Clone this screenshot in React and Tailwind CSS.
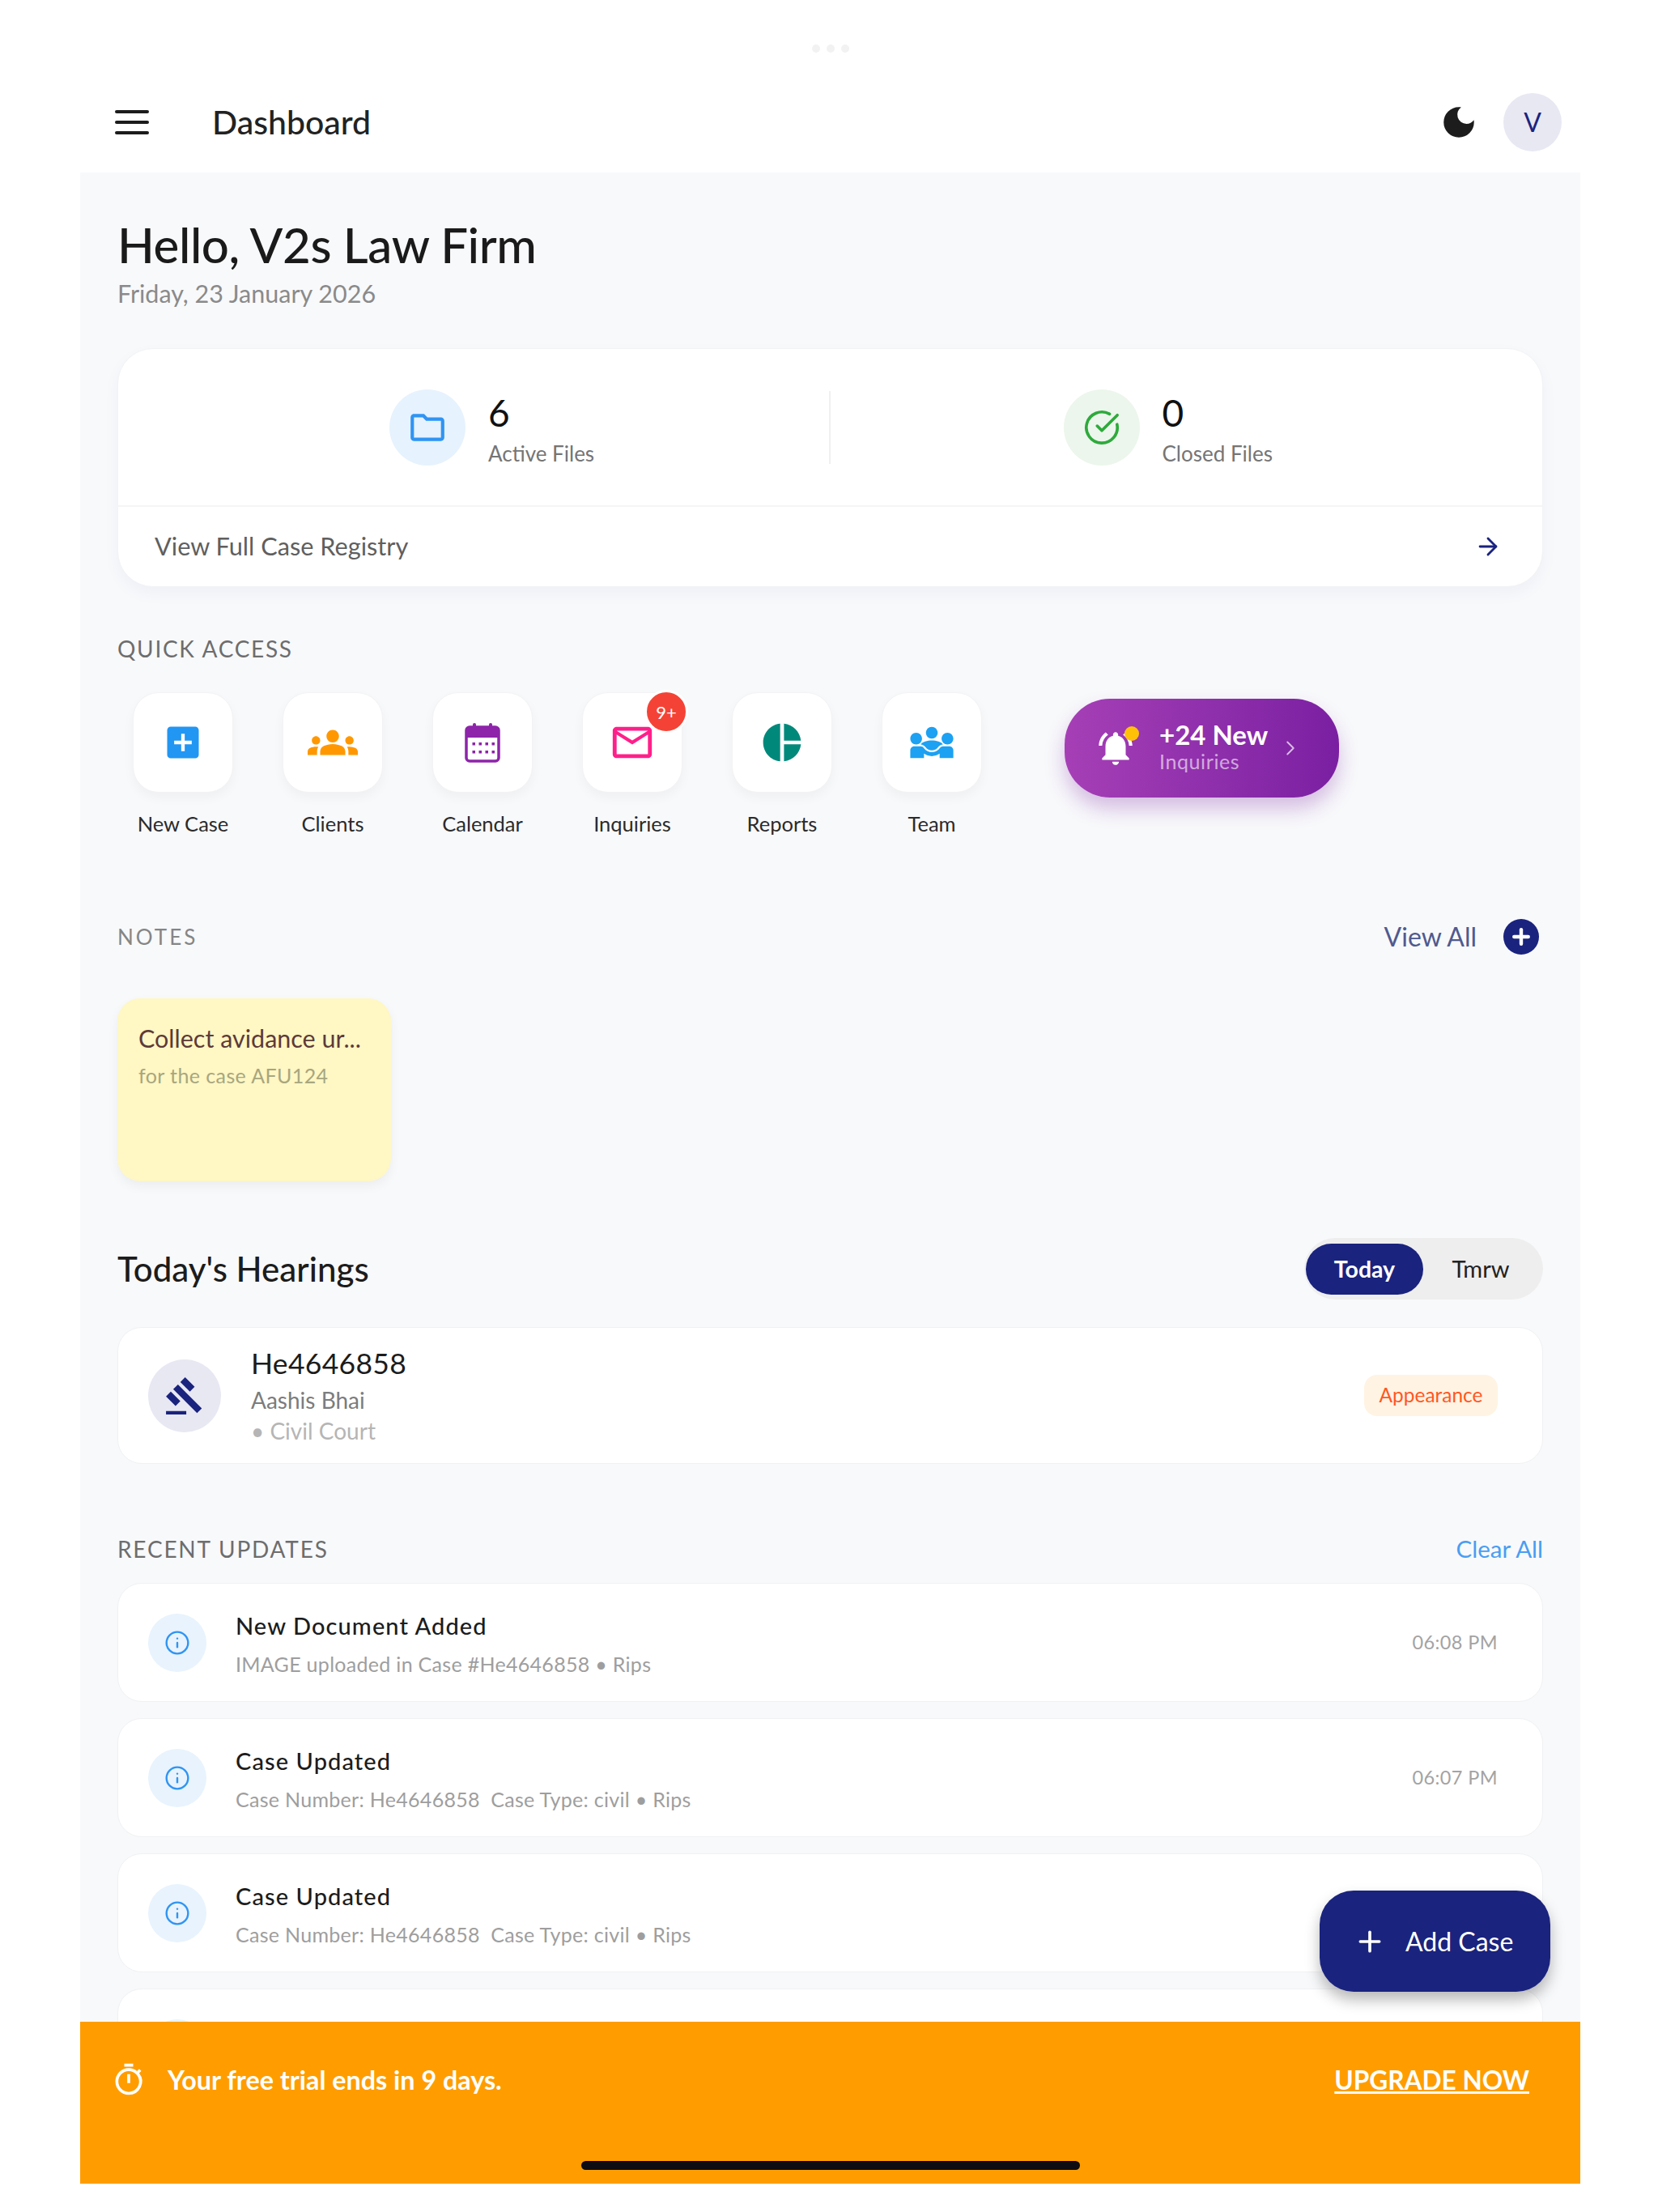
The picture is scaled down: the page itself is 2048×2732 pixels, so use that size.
import React from "react";
import { ArrowRight, Plus, ChevronRight, Info, CircleCheckBig } from "lucide-react";
import { MdAddBox, MdGroups, MdMailOutline, MdPieChart, MdDiversity3, MdNotificationsActive, MdGavel, MdOutlineTimer, MdOutlineFolder, MdDarkMode } from "react-icons/md";

function CalendarIcon() {
  return (
    <svg width="46" height="50" viewBox="0 0 46 50" fill="none">
      <rect x="11" y="1" width="4" height="10" rx="2" fill="#8e24aa" />
      <rect x="31" y="1" width="4" height="10" rx="2" fill="#8e24aa" />
      <rect x="3" y="6" width="40" height="42" rx="4" stroke="#8e24aa" strokeWidth="3.5" />
      <path d="M3 10a4 4 0 0 1 4-4h32a4 4 0 0 1 4 4v9H3z" fill="#8e24aa" />
      {[12, 20, 28, 36].map((x) => <rect key={x} x={x - 1.5} y="25" width="3.5" height="3.5" fill="#8e24aa" />)}
      {[12, 20, 28, 36].map((x) => <rect key={x} x={x - 1.5} y="35" width="3.5" height="3.5" fill="#8e24aa" />)}
    </svg>
  );
}

function Tile({ label, icon, badge }) {
  return (
    <div className="flex flex-col items-center w-[124px]">
      <div className="relative w-[124px] h-[124px] rounded-[32px] bg-white border border-[#f3f3f5] shadow-[0_6px_14px_rgba(0,0,0,0.04)] flex items-center justify-center">
        {icon}
        {badge && (
          <span className="absolute -top-[4px] -right-[8px] w-[54px] h-[54px] rounded-full bg-[#f44336] border-[3px] border-white text-white text-[22px] flex items-center justify-center">
            {badge}
          </span>
        )}
      </div>
      <span className="mt-[22px] text-[25.5px] leading-[32px] text-[#2b2b2b] whitespace-nowrap">{label}</span>
    </div>
  );
}

function Update({ title, sub, time }) {
  return (
    <div className="h-[147px] shrink-0 rounded-[30px] bg-white border border-[#f0f1f3] flex items-center pl-[37px] pr-[55px]">
      <div className="w-[72px] h-[72px] rounded-full bg-[#e8f3fd] flex items-center justify-center shrink-0">
        <Info size={32} color="#2f94f3" strokeWidth={1.8} />
      </div>
      <div className="ml-[36px] flex-1 pt-[4px]">
        <div className="text-[29px] leading-[36px] font-medium text-[#1c1c1c] tracking-[1.1px]">{title}</div>
        <div className="mt-[13px] text-[25px] leading-[32px] text-[#9e9e9e] tracking-[0.3px]">{sub}</div>
      </div>
      {time && <div className="text-[23.5px] text-[#a3a3a3] tracking-[0.4px]">{time}</div>}
    </div>
  );
}

function PartialRow() {
  return (
    <div className="h-[147px] shrink-0 rounded-[30px] bg-white border border-[#f0f1f3] flex items-center pl-[37px]">
      <div className="w-[72px] h-[72px] rounded-full bg-[#e8f3fd]" />
    </div>
  );
}

export default function App() {
  return (
    <div className="w-[2048px] h-[2732px] bg-white pl-[99px] pr-[96px] pb-[35px] flex flex-col overflow-hidden text-[#1c1c1c]" style={{ fontFamily: "Lato, 'Noto Sans', sans-serif" }}>
      <div className="h-[213px] shrink-0 relative">
        <div className="absolute left-[904px] top-[55px] flex gap-[8px]">
          <span className="w-[10px] h-[10px] rounded-full bg-[#f2f2f2]" />
          <span className="w-[10px] h-[10px] rounded-full bg-[#f2f2f2]" />
          <span className="w-[10px] h-[10px] rounded-full bg-[#f2f2f2]" />
        </div>
        <div className="h-[213px] flex items-center pt-[118px] pb-[30px] pl-[43px] pr-[23px]">
          <div className="w-[42px] flex flex-col gap-[9px]">
            <span className="h-[4px] bg-[#1c1c1c] rounded-full" />
            <span className="h-[4px] bg-[#1c1c1c] rounded-full" />
            <span className="h-[4px] bg-[#1c1c1c] rounded-full" />
          </div>
          <div className="ml-[78px] text-[41px] leading-[50px] font-medium text-[#222]">Dashboard</div>
          <div className="ml-auto flex items-center">
            <MdDarkMode size={50} color="#1c1c1c" />
            <div className="ml-[30px] w-[72px] h-[72px] rounded-full bg-[#e8e8f3] flex items-center justify-center text-[32px] text-[#1a237e]">V</div>
          </div>
        </div>
      </div>

      <div className="relative flex-1 min-h-0 bg-[#f8f9fb] flex flex-col overflow-hidden">
        <div className="px-[46px] flex-1 min-h-0 overflow-hidden">
          <h1 className="mt-[51px] text-[60px] leading-[76px] font-medium text-[#1a1a1a] tracking-[-0.4px] whitespace-nowrap">Hello, V2s Law Firm</h1>
          <div className="mt-[3px] text-[30.5px] leading-[38px] text-[#8a8a8a]">Friday, 23 January 2026</div>

          <div className="mt-[49px] h-[295px] rounded-[44px] bg-white border border-[#f2f3f5] shadow-[0_8px_20px_rgba(26,35,126,0.04)] flex flex-col">
            <div className="h-[195px] flex items-center border-b-2 border-[#f5f5f6]">
              <div className="w-1/2 flex items-center pl-[335px] h-[90px] border-r-2 border-[#f0f0f1]">
                <div className="w-[94px] h-[94px] rounded-full bg-[#e6f2fe] flex items-center justify-center shrink-0">
                  <MdOutlineFolder size={50} color="#2f94f3" />
                </div>
                <div className="ml-[28px] pt-[3px]">
                  <div className="text-[46px] leading-[56px] text-[#111]">6</div>
                  <div className="mt-[6px] text-[26px] leading-[32px] text-[#757575]">Active Files</div>
                </div>
              </div>
              <div className="w-1/2 flex items-center pl-[288px] h-[90px]">
                <div className="w-[94px] h-[94px] rounded-full bg-[#ecf6ec] flex items-center justify-center shrink-0">
                  <CircleCheckBig size={46} color="#2eaa3c" strokeWidth={1.9} />
                </div>
                <div className="ml-[28px] pt-[3px]">
                  <div className="text-[46px] leading-[56px] text-[#111]">0</div>
                  <div className="mt-[6px] text-[26px] leading-[32px] text-[#757575]">Closed Files</div>
                </div>
              </div>
            </div>
            <div className="flex-1 flex items-center pl-[45px] pr-[50px]">
              <span className="text-[30.7px] text-[#5f5f5f]">View Full Case Registry</span>
              <ArrowRight className="ml-auto" size={34} color="#1a237e" strokeWidth={2} />
            </div>
          </div>

          <div className="mt-[59px] text-[28px] leading-[34px] tracking-[1.7px] text-[#6d6d6d]">QUICK ACCESS</div>

          <div className="mt-[37px] ml-[19px] flex items-start gap-[61px]">
            <Tile label="New Case" icon={<MdAddBox size={52} color="#2196f3" />} />
            <Tile label="Clients" icon={<MdGroups size={62} color="#ff9800" />} />
            <Tile label="Calendar" icon={<CalendarIcon />} />
            <Tile label="Inquiries" badge="9+" icon={<MdMailOutline size={58} color="#ff1f8a" />} />
            <Tile label="Reports" icon={<MdPieChart size={56} color="#00897b" />} />
            <Tile label="Team" icon={<MdDiversity3 size={58} color="#1da1f2" />} />
            <div className="ml-[41px] mt-[8px] w-[339px] h-[122px] rounded-[56px] bg-gradient-to-r from-[#a63fb6] to-[#7b1fa2] shadow-[0_14px_24px_rgba(123,31,162,0.28)] flex items-center pl-[38px]">
              <div className="relative w-[50px] h-[50px]">
                <MdNotificationsActive size={50} color="#ffffff" />
                <span className="absolute top-[-2px] right-[-4px] w-[18px] h-[18px] rounded-full bg-[#ffc107]" />
              </div>
              <div className="ml-[29px] pb-[6px]">
                <div className="text-[33px] leading-[38px] font-bold text-white whitespace-nowrap">+24 New</div>
                <div className="text-[25px] leading-[28px] tracking-[0.6px] text-white/60">Inquiries</div>
              </div>
              <ChevronRight className="ml-[13px]" size={30} color="#ffffff" strokeOpacity={0.7} strokeWidth={1.5} />
            </div>
          </div>

          <div className="mt-[99px] h-[50px] flex items-center">
            <span className="text-[26px] tracking-[3px] text-[#858585]">NOTES</span>
            <span className="ml-auto text-[32px] text-[#4f5a8f]">View All</span>
            <span className="ml-[33px] mr-[5px] w-[44px] h-[44px] rounded-full bg-[#1a237e] flex items-center justify-center">
              <Plus size={30} color="#fff" strokeWidth={3.5} />
            </span>
          </div>

          <div className="mt-[51px] w-[338px] h-[226px] rounded-[28px] bg-[#fff7c4] shadow-[0_6px_14px_rgba(0,0,0,0.05)] pt-[30px] px-[26px]">
            <div className="text-[30.5px] leading-[38px] text-[#5d3a38] whitespace-nowrap">Collect avidance ur...</div>
            <div className="mt-[12px] text-[25px] leading-[30px] text-[#a8a67e] tracking-[0.4px] whitespace-nowrap">for the case AFU124</div>
          </div>

          <div className="mt-[70px] h-[76px] flex items-center">
            <span className="text-[42px] font-medium text-[#1c1c1c]">Today's Hearings</span>
            <div className="ml-auto w-[295px] h-[76px] rounded-full bg-[#eeeeee] flex items-center pl-[2px]">
              <span className="w-[145px] h-[63px] rounded-full bg-[#1a237e] border-0 text-white text-[28.5px] font-bold flex items-center justify-center">Today</span>
              <span className="flex-1 text-center text-[29px] text-[#222] pr-[6px]">Tmrw</span>
            </div>
          </div>

          <div className="mt-[34px] h-[169px] rounded-[30px] bg-white border border-[#f0f1f3] flex items-center pl-[37px] pr-[55px]">
            <div className="w-[90px] h-[90px] rounded-full bg-[#e8e8f3] flex items-center justify-center">
              <MdGavel size={50} color="#1a237e" />
            </div>
            <div className="ml-[37px] flex-1">
              <div className="text-[35.5px] leading-[44px] text-[#1c1c1c] tracking-[0.3px]">He4646858</div>
              <div className="text-[28px] leading-[36px] text-[#7c7c7c] mt-[5px]">Aashis Bhai</div>
              <div className="text-[28px] leading-[36px] text-[#b5b5b5] mt-[2px]">• Civil Court</div>
            </div>
            <div className="w-[165px] h-[51px] rounded-[16px] bg-[#fff3e3] flex items-center justify-center text-[24.5px] text-[#ff5722]">Appearance</div>
          </div>

          <div className="mt-[86px] h-[38px] flex items-center">
            <span className="text-[28px] tracking-[1.8px] text-[#6d6d6d]">RECENT UPDATES</span>
            <span className="ml-auto text-[29.5px] text-[#4a9df2]">Clear All</span>
          </div>

          <div className="mt-[23px] flex flex-col gap-[20px]">
            <Update title="New Document Added" sub="IMAGE uploaded in Case #He4646858 • Rips" time="06:08 PM" />
            <Update title="Case Updated" sub={"Case Number: He4646858\u00a0\u00a0Case Type: civil • Rips"} time="06:07 PM" />
            <Update title="Case Updated" sub={"Case Number: He4646858\u00a0\u00a0Case Type: civil • Rips"} />
            <PartialRow />
          </div>
        </div>

        <div className="absolute left-[1531px] top-[2122px] w-[285px] h-[125px] rounded-[42px] bg-[#1a237e] shadow-[0_10px_18px_rgba(0,0,0,0.28)] flex items-center pl-[42px] text-white">
          <Plus size={40} strokeWidth={2.2} />
          <span className="ml-[24px] text-[32px]">Add Case</span>
        </div>

        <div className="relative h-[200px] shrink-0 bg-[#ff9d00] flex items-start pt-[50px] pl-[38px] pr-[63px] text-white">
          <MdOutlineTimer size={44} />
          <span className="ml-[26px] text-[32.3px] leading-[44px] font-bold">Your free trial ends in 9 days.</span>
          <span className="ml-auto text-[31.6px] leading-[44px] font-bold underline">UPGRADE NOW</span>
          <span className="absolute left-[619px] top-[172px] w-[616px] h-[11px] rounded-full bg-[#0c0c12]" />
        </div>
      </div>
    </div>
  );
}
